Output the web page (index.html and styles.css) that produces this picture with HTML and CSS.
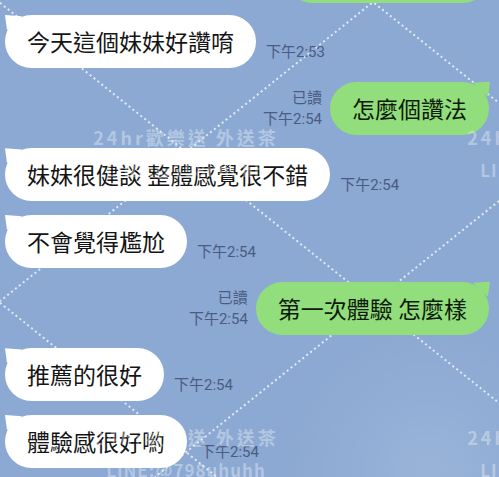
FILE: index.html
```html
<!DOCTYPE html>
<html lang="zh-Hant">
<head>
    <meta charset="UTF-8">
    <meta name="viewport" content="width=device-width, initial-scale=1.0">
    <title>聊天</title>
    <link rel="stylesheet" href="styles.css">
</head>
<body>
    <div class="screen">
        <svg class="pattern" width="499" height="477" viewBox="0 0 499 477">
            <line x1="370.5" y1="0" x2="499" y2="103"/>
            <line x1="0" y1="2.8" x2="499" y2="403"/>
            <line x1="0" y1="302.8" x2="217" y2="477"/>
            <line x1="375.5" y1="0" x2="0" y2="301.2"/>
            <line x1="499" y1="201" x2="155" y2="477"/>
        </svg>

        <div class="chat">
            <div class="row out">
                <div class="bubble green stub"></div>
            </div>
            <div class="row in">
                <div class="bubble white">今天這個妹妹好讚唷</div>
                <div class="meta">下午2:53</div>
            </div>
            <div class="row out">
                <div class="meta">已讀<br>下午2:54</div>
                <div class="bubble green">怎麼個讚法</div>
            </div>
            <div class="row in">
                <div class="bubble white">妹妹很健談 整體感覺很不錯</div>
                <div class="meta">下午2:54</div>
            </div>
            <div class="row in">
                <div class="bubble white">不會覺得尷尬</div>
                <div class="meta">下午2:54</div>
            </div>
            <div class="row out">
                <div class="meta">已讀<br>下午2:54</div>
                <div class="bubble green">第一次體驗 怎麼樣</div>
            </div>
            <div class="row in">
                <div class="bubble white">推薦的很好</div>
                <div class="meta">下午2:54</div>
            </div>
            <div class="row in">
                <div class="bubble white">體驗感很好喲</div>
                <div class="meta late">下午2:54</div>
            </div>
        </div>

        <div class="mark mark-a">24hr歡樂送 外送茶<br><span class="mark-id">LINE:@798uhuhh</span></div>
        <div class="mark mark-b">24hr歡樂送 外送茶<br><span class="mark-id">LINE:@798uhuhh</span></div>
        <div class="mark mark-c">24hr歡樂送 外送茶<br><span class="mark-id">LINE:@798uhuhh</span></div>
        <div class="mark mark-d">24hr歡樂送 外送茶<br><span class="mark-id">LINE:@798uhuhh</span></div>
    </div>
</body>
</html>
```
FILE: styles.css
```css
body {
    margin: 0;
    background: #8ca9d3;
    font-family: "Noto Sans CJK TC", "Noto Sans", sans-serif;
    overflow: hidden;
}
.screen {
    position: relative;
    width: 499px;
    height: 477px;
    overflow: hidden;
    background: radial-gradient(circle at 430px 470px, rgba(255, 255, 255, 0.12), rgba(255, 255, 255, 0) 140px);
}
.pattern {
    position: absolute;
    top: 0;
    left: 0;
}
.pattern line {
    stroke: #ffffff;
    stroke-opacity: 0.75;
    stroke-width: 2;
    stroke-dasharray: 2 3;
}
.chat {
    position: relative;
    display: flex;
    flex-direction: column;
    gap: 13.67px;
    margin-top: -50px;
    padding: 0 10px 0 5px;
}
.row {
    display: flex;
    align-items: flex-end;
}
.row.in { gap: 10px; }
.row.out { justify-content: flex-end; gap: 8px; }
.bubble {
    position: relative;
    height: 53px;
    line-height: 53px;
    padding: 0 22px;
    border-radius: 27px;
    font-size: 23px;
    color: #151515;
    white-space: nowrap;
}
.bubble::before {
    content: "";
    position: absolute;
    top: 0;
    width: 17px;
    height: 15px;
    background: inherit;
}
.white { background: #ffffff; }
.white::before {
    left: 0;
    clip-path: polygon(0 0, 100% 8%, 12% 100%);
}
.green { background: #92de7c; color: #0e1a0a; }
.green::before {
    right: -1px;
    clip-path: polygon(100% 0, 0 8%, 88% 100%);
}
.stub {
    width: 159px;
    margin-bottom: -1.67px;
}
.meta {
    font-family: Roboto, "Noto Sans CJK TC", sans-serif;
    font-size: 15px;
    line-height: 21px;
    color: #4a5c82;
    margin-bottom: 5px;
    white-space: nowrap;
}
.out .meta { text-align: right; }
.meta.late { margin-left: 3px; }
.mark {
    position: absolute;
    width: 230px;
    text-align: center;
    font-size: 18px;
    font-weight: 700;
    line-height: 32px;
    letter-spacing: 3px;
    color: rgba(255, 255, 255, 0.36);
    white-space: nowrap;
}
.mark-id {
    font-size: 17px;
    letter-spacing: 1px;
}
.mark-a { left: 71px; top: 121px; }
.mark-b { left: 445px; top: 121px; }
.mark-c { left: 71px; top: 421px; }
.mark-d { left: 445px; top: 421px; }
```
